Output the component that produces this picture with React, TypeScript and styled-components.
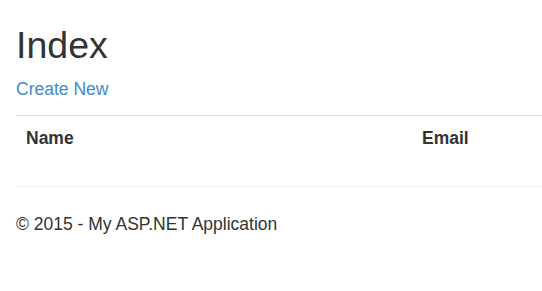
import styled, { createGlobalStyle } from "styled-components";

const GlobalStyle = createGlobalStyle`
  html, body {
    margin: 0;
    padding: 0;
    background: #fff;
  }
  body {
    font-family: "Liberation Sans", Arial, sans-serif;
    font-size: 17.5px;
    line-height: 25px;
    color: #333;
  }
`;

const Clip = styled.div`
  overflow: hidden;
`;

const Container = styled.div`
  padding: 0 16px;
`;

const Title = styled.h2`
  margin: 25px 0 11px;
  font-size: 37.5px;
  font-weight: 500;
  line-height: 1.1;
  color: #333;
`;

const Para = styled.p`
  margin: 0 0 13px;
`;

const CreateLink = styled.a`
  color: #428bca;
  text-decoration: none;
`;

const Table = styled.table`
  width: 640px;
  table-layout: fixed;
  border-collapse: collapse;
  border-spacing: 0;
  margin-bottom: 25px;
`;

const HeadCell = styled.th<{ $width?: string }>`
  width: ${(p) => p.$width ?? "auto"};
  padding: 10px;
  text-align: left;
  font-weight: bold;
  line-height: 25px;
  border-top: 1px solid #ddd;
  vertical-align: top;
`;

const Rule = styled.hr`
  margin: 25px -16px 25px 0;
  border: 0;
  border-top: 1px solid #eee;
`;

const Footer = styled.footer``;

export default function App() {
  return (
    <>
      <GlobalStyle />
      <Clip>
        <Container>
          <Title>Index</Title>
          <Para>
            <CreateLink href="#">Create New</CreateLink>
          </Para>
          <Table>
            <colgroup>
              <col style={{ width: 396 }} />
              <col style={{ width: 160 }} />
              <col />
            </colgroup>
            <tbody>
              <tr>
                <HeadCell>Name</HeadCell>
                <HeadCell>Email</HeadCell>
                <HeadCell />
              </tr>
            </tbody>
          </Table>
          <Rule />
          <Footer>
            <Para>&copy; 2015 - My ASP.NET Application</Para>
          </Footer>
        </Container>
      </Clip>
    </>
  );
}
